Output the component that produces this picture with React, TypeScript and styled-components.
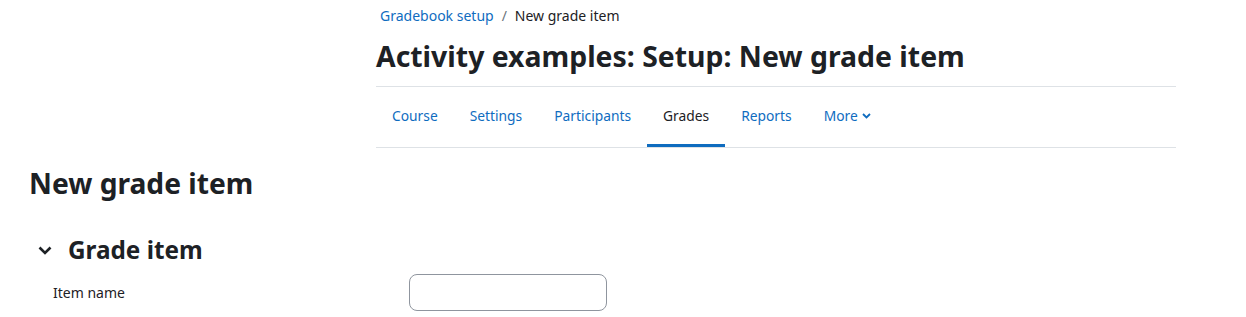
import styled, { createGlobalStyle } from "styled-components";

const GlobalStyle = createGlobalStyle`
  body {
    margin: 0;
    background: #fff;
    font-family: "Noto Sans", "Open Sans", sans-serif;
    color: #1d2125;
  }
`;

const Page = styled.div`
  width: 1246px;
  height: 317px;
  overflow: hidden;
`;

const Header = styled.header`
  margin-left: 376px;
  width: 800px;
`;

const Breadcrumb = styled.nav`
  display: flex;
  align-items: center;
  gap: 8px;
  padding: 5px 0 0 4px;
  height: 20px;
  font-size: 14px;
`;

const Crumb = styled.a`
  color: #0f6cbf;
  text-decoration: none;
`;

const Sep = styled.span`
  color: #6a737b;
`;

const Current = styled.span`
  color: #1d2125;
`;

const Title = styled.h1`
  margin: 0;
  padding: 14px 0 13px;
  font-size: 28.4px;
  font-weight: 700;
  line-height: 34px;
  border-bottom: 1px solid #dee2e6;
`;

const Tabs = styled.ul`
  display: flex;
  margin: 0;
  padding: 0;
  list-style: none;
  border-bottom: 1px solid #dee2e6;
`;

const Tab = styled.li<{ active?: boolean }>`
  display: flex;
  align-items: center;
  gap: 4px;
  height: 60px;
  padding: 0 16px;
  box-sizing: border-box;
  font-size: 13.8px;
  color: ${(p) => (p.active ? "#1d2125" : "#0f6cbf")};
  border-bottom: 3px solid ${(p) => (p.active ? "#0f6cbf" : "transparent")};
`;

const Main = styled.main`
  padding: 18px 0 0 29px;
`;

const PageHeading = styled.h2`
  margin: 0;
  font-size: 28.2px;
  font-weight: 700;
  line-height: 34px;
`;

const Section = styled.section`
  margin-top: 35px;
`;

const SectionHeading = styled.h3`
  display: flex;
  align-items: center;
  gap: 16px;
  margin: 0 0 0 9px;
  font-size: 24.3px;
  font-weight: 700;
  line-height: 30px;
`;

const Row = styled.div`
  display: grid;
  grid-template-columns: 356px 198px;
  align-items: center;
  margin-top: 9px;
  padding-left: 24px;
`;

const Label = styled.label`
  font-size: 14px;
  color: #1d2125;
`;

const Input = styled.input`
  width: 198px;
  height: 37px;
  box-sizing: border-box;
  border: 1px solid #8f959e;
  border-radius: 8px;
  background: #fff;
`;

export default function App() {
  return (
    <Page>
      <GlobalStyle />
      <Header>
        <Breadcrumb>
          <Crumb>Gradebook setup</Crumb>
          <Sep>/</Sep>
          <Current>New grade item</Current>
        </Breadcrumb>
        <Title>Activity examples: Setup: New grade item</Title>
        <Tabs>
          <Tab>Course</Tab>
          <Tab>Settings</Tab>
          <Tab>Participants</Tab>
          <Tab active>Grades</Tab>
          <Tab>Reports</Tab>
          <Tab>
            More
            <svg width="9" height="6" viewBox="0 0 9 6">
              <path d="M1 1l3.5 3.5L8 1" fill="none" stroke="#0f6cbf" strokeWidth="1.8" />
            </svg>
          </Tab>
        </Tabs>
      </Header>
      <Main>
        <PageHeading>New grade item</PageHeading>
        <Section>
          <SectionHeading>
            <svg width="14" height="9" viewBox="0 0 14 9">
              <path d="M1.5 1.5L7 7l5.5-5.5" fill="none" stroke="#1d2125" strokeWidth="2.6" />
            </svg>
            Grade item
          </SectionHeading>
          <Row>
            <Label>Item name</Label>
            <Input />
          </Row>
        </Section>
      </Main>
    </Page>
  );
}
